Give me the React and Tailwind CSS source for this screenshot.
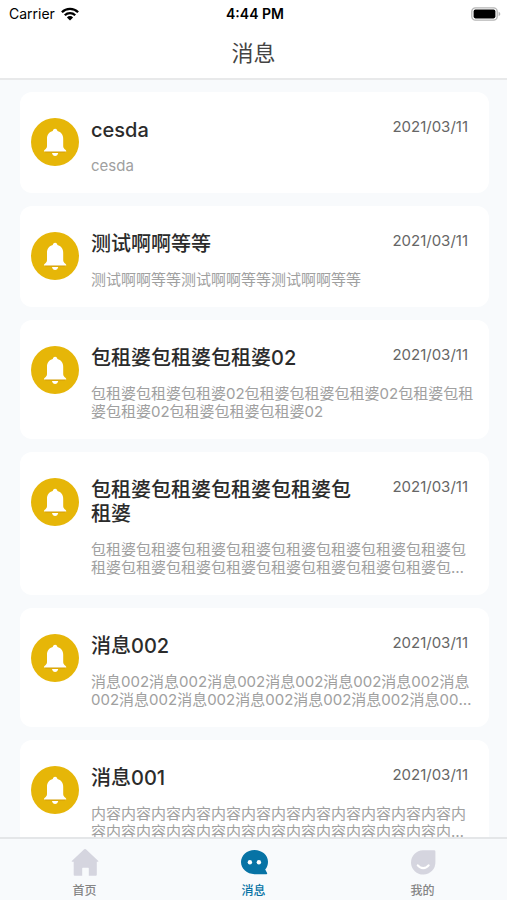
import { useState } from 'react';

const messages = [
  { id: 1, title: 'cesda', body: 'cesda', date: '2021/03/11' },
  { id: 2, title: '测试啊啊等等', body: '测试啊啊等等'.repeat(3), date: '2021/03/11' },
  { id: 3, title: '包租婆包租婆包租婆02', body: '包租婆包租婆包租婆02'.repeat(4), date: '2021/03/11' },
  { id: 4, title: '包租婆'.repeat(5), body: '包租婆'.repeat(18), date: '2021/03/11' },
  { id: 5, title: '消息002', body: '消息002'.repeat(14), date: '2021/03/11' },
  { id: 6, title: '消息001', body: '内容'.repeat(27), date: '2021/03/11' },
];

const WifiIcon = () => (
  <svg viewBox="0 0 18 14" className="h-[14px] w-[18px]" aria-hidden="true">
    <g fill="none" stroke="#000" strokeWidth="2.3">
      <path d="M0.9 5.2a11.5 11.5 0 0 1 16.2 0" />
      <path d="M3.8 8.3a7.4 7.4 0 0 1 10.4 0" />
    </g>
    <path d="M9 13.6 5.9 10.4a4.4 4.4 0 0 1 6.2 0z" />
  </svg>
);

const BatteryIcon = () => (
  <svg viewBox="0 0 30 14" className="h-[14px] w-[30px]" aria-hidden="true">
    <rect x="0.8" y="0.8" width="25.4" height="12.4" rx="3.6" fill="#fff" stroke="#b5b5b5" strokeWidth="1.3" />
    <rect x="2.6" y="2.6" width="21.8" height="8.8" rx="1.8" fill="#000" />
    <path d="M27.6 4.8v4.4c1-.4 1.7-1.2 1.7-2.2s-.7-1.8-1.7-2.2z" fill="#b5b5b5" />
  </svg>
);

const BellIcon = () => (
  <svg viewBox="0 0 48 48" className="h-12 w-12 shrink-0" aria-hidden="true">
    <circle cx="24" cy="24" r="24" fill="#e6b608" />
    <path d="M13.5 33h21.2l-1 1.5H14.500z" fill="#d39c06" />
    <path d="M21 34.900h6.200c-.4 1.900-1.500 3-3.100 3s-2.700-1.100-3.100-3z" fill="#fff" />
    <path
      d="M24.1 10.8c1.4 0 2.3 1 2.3 2.3 3.6 1 5.8 3.8 5.8 7.7V28c0 1.700.8 2.700 2.200 3.800.6.500.9 1 .9 1.700H12.900c0-.7.3-1.200.9-1.700 1.400-1.100 2.200-2.100 2.200-3.800v-7.200c0-3.900 2.200-6.700 5.800-7.700 0-1.300.9-2.300 2.300-2.300z"
      fill="#fff"
    />
  </svg>
);

const HomeIcon = () => (
  <svg viewBox="0 0 28 28" className="h-7 w-7" fill="currentColor" aria-hidden="true">
    <path d="M13.200 1.300a1.300 1.300 0 0 1 1.700 0l12.200 11.500c.5.500.3 1-.3 1H25.800V26.700a1 1 0 0 1-1 1H17.800V20.300a.6.6 0 0 0-.6-.6H11.800a.6.6 0 0 0-.6.6V27.700H3.700a1 1 0 0 1-1-1V13.800H1.300c-.6 0-.8-.5-.3-1z" />
  </svg>
);

const ChatIcon = () => (
  <svg viewBox="0 0 28 28" className="h-7 w-7" aria-hidden="true">
    <path d="M14.5 2C21.8 2 28 7 28 13.7c0 3.200-1 5.800-2.800 7.900l1.900 3.400c.3.700 0 1.200-.7 1.200H14.5C7 26.200 1 20.700 1 14.100S7 2 14.5 2z" fill="currentColor" />
    <circle cx="9.900" cy="14.200" r="2.200" fill="#fff" />
    <circle cx="18.900" cy="14.200" r="2.200" fill="#fff" />
  </svg>
);

const ProfileIcon = () => (
  <svg viewBox="0 0 28 28" className="h-7 w-7" aria-hidden="true">
    <path d="M14 2.200h11a1.400 1.400 0 0 1 1.400 1.400V14A12.200 12.200 0 1 1 14 2.200z" fill="currentColor" />
    <path d="M8.800 17.400c2.800 3.600 8 3.600 10.800 0" fill="none" stroke="#fff" strokeWidth="2.2" strokeLinecap="round" />
  </svg>
);

const tabs = [
  { key: 'home', label: '首页', Icon: HomeIcon },
  { key: 'message', label: '消息', Icon: ChatIcon },
  { key: 'mine', label: '我的', Icon: ProfileIcon },
];

const MessageCard = ({ message }) => (
  <li className="flex gap-3 rounded-xl bg-white pt-[26px] pr-[13px] pb-[18px] pl-[11px]">
    <BellIcon />
    <div className="min-w-0 flex-1">
      <div className="flex items-start justify-between gap-8 pr-2">
        <h2 className="text-xl leading-6 font-medium text-[#2b2b2b]">{message.title}</h2>
        <time className="shrink-0 text-[15px] leading-[18px] text-[#666666]">{message.date}</time>
      </div>
      <p className="mt-[15px] line-clamp-2 text-[15px] leading-[18px] text-[#a0a0a0]">{message.body}</p>
    </div>
  </li>
);

const App = () => {
  const [activeTab, setActiveTab] = useState('message');

  return (
    <div className="flex h-screen flex-col bg-[#f8fafc] font-['Inter','Noto_Sans_CJK_SC',sans-serif]">
      {/* Status bar and title */}
      <header className="border-b-2 border-[#e8e9ea] bg-white">
        <div className="grid h-7 grid-cols-3 items-center pr-[6px] pl-[9px] text-sm text-black">
          <div className="flex items-center gap-[6px]">
            <span>Carrier</span>
            <WifiIcon />
          </div>
          <span className="text-center font-semibold">4:44 PM</span>
          <div className="flex justify-end">
            <BatteryIcon />
          </div>
        </div>
        <h1 className="h-[50px] text-center text-[22px] leading-[50px] text-[#444444]">消息</h1>
      </header>

      {/* Message list */}
      <main className="min-h-0 flex-1 overflow-y-auto pt-3 pr-[18px] pl-5 [scrollbar-width:none]">
        <ul className="flex flex-col gap-[13px] pb-3">
          {messages.map((message) => (
            <MessageCard key={message.id} message={message} />
          ))}
        </ul>
      </main>

      {/* Tab bar */}
      <nav className="grid grid-cols-3 border-t-2 border-[#e4e6e8] bg-[#f8fafc]">
        {tabs.map(({ key, label, Icon }) => (
          <button
            key={key}
            type="button"
            onClick={() => setActiveTab(key)}
            className="flex h-[61px] flex-col items-center gap-[7px] pt-[9px]"
          >
            <span className={activeTab === key ? 'text-[#0773a5]' : 'text-[#d5d5df]'}>
              <Icon />
            </span>
            <span
              className={`text-xs leading-4 font-medium ${
                activeTab === key ? 'text-[#0773a5]' : 'text-[#858585]'
              }`}
            >
              {label}
            </span>
          </button>
        ))}
      </nav>
    </div>
  );
};

export default App;
